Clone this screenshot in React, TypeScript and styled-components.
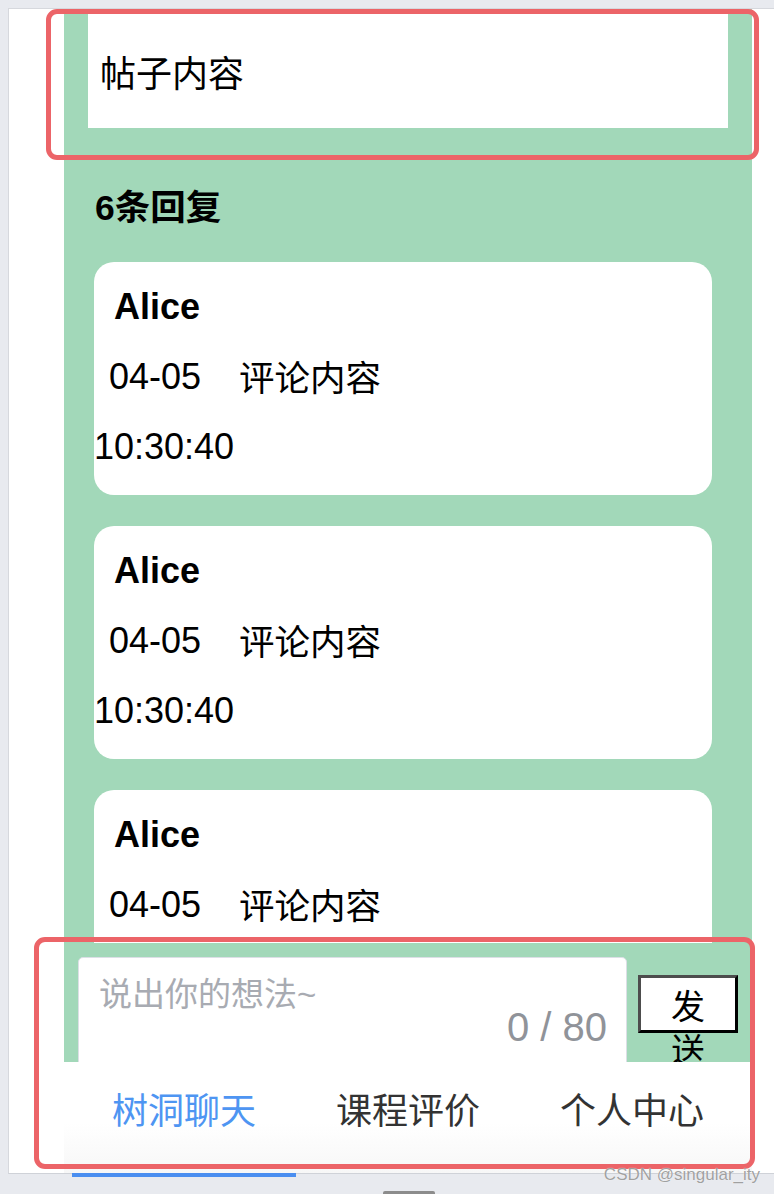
import React from "react";
import styled, { createGlobalStyle } from "styled-components";

const GlobalStyle = createGlobalStyle`
  html, body {
    margin: 0;
    padding: 0;
    background: #e8eaef;
  }
  body {
    font-family: "Liberation Sans", "Noto Sans CJK SC", sans-serif;
    color: #000;
  }
`;

const Page = styled.div`
  width: 774px;
  height: 1194px;
  box-sizing: border-box;
  padding: 8px 0 0 8px;
  display: flex;
  flex-direction: column;
  overflow: hidden;
  position: relative;
`;

const Viewport = styled.div`
  height: 1166px;
  box-sizing: border-box;
  background: #fff;
  border-top: 1px solid #d6d8dd;
  border-left: 1px solid #d6d8dd;
  border-bottom: 1px solid #cfd2d8;
  padding-left: 55px;
  position: relative;
`;

const Column = styled.div`
  width: 688px;
  height: 100%;
  display: flex;
  flex-direction: column;
`;

const Scroll = styled.div`
  flex: 1;
  min-height: 0;
  overflow: hidden;
  background: #a2d8b9;
`;

const Post = styled.div`
  height: 119px;
  box-sizing: border-box;
  margin: 0 24px;
  padding: 46px 12px 0;
  background: #fff;
  font-size: 36px;
  line-height: 40px;
`;

const Title = styled.h3`
  margin: 60px 0 34px 31px;
  font-size: 35.5px;
  line-height: 40px;
  font-weight: bold;
`;

const CardList = styled.div`
  display: flex;
  flex-direction: column;
  gap: 31px;
  margin: 0 40px 0 30px;
`;

const Card = styled.div`
  height: 233px;
  box-sizing: border-box;
  padding: 10px 0 13px 20px;
  background: #fff;
  border-radius: 20px;
  font-size: 36px;
  line-height: 70px;
  flex-shrink: 0;
`;

const Name = styled.div`
  font-weight: bold;
`;

const Row = styled.div`
  display: flex;
  align-items: flex-start;
`;

const DateCol = styled.div`
  width: 130px;
  margin-left: -5px;
  flex-shrink: 0;
`;

const DateLine = styled.div<{ $shift?: number }>`
  margin-left: ${(p) => p.$shift ?? 0}px;
  white-space: nowrap;
`;

const Content = styled.div`
  font-size: 35.5px;
  padding-top: 2px;
`;

const Composer = styled.div`
  height: 119px;
  flex-shrink: 0;
  box-sizing: border-box;
  padding: 14px 14px 0;
  background: #a2d8b9;
  display: flex;
  align-items: flex-start;
  gap: 11px;
  overflow: hidden;
`;

const InputBox = styled.div`
  position: relative;
  width: 549px;
  height: 130px;
  flex-shrink: 0;
`;

const TextArea = styled.textarea`
  width: 100%;
  height: 100%;
  box-sizing: border-box;
  border: 1px solid #dcdfe6;
  border-radius: 5px;
  background: #fff;
  padding: 17px 20px;
  font-family: "Liberation Sans", "Noto Sans CJK SC", sans-serif;
  font-size: 33px;
  line-height: 40px;
  resize: none;
  outline: none;
  &::placeholder {
    color: #a8abb2;
  }
`;

const Counter = styled.span`
  position: absolute;
  right: 20px;
  top: 48px;
  font-size: 40px;
  line-height: 44px;
  color: #909399;
`;

const SendButton = styled.button`
  width: 100px;
  height: 58px;
  margin-top: 18px;
  flex-shrink: 0;
  box-sizing: border-box;
  padding: 7px 0 0;
  background: #fff;
  border: 3px outset #4d4d4d;
  display: flex;
  justify-content: center;
  align-items: flex-start;
  overflow: visible;
  font-family: "Liberation Sans", "Noto Sans CJK SC", sans-serif;
  font-size: 34px;
  line-height: 44px;
  color: #000;
`;

const SendLabel = styled.span`
  width: 36px;
  text-align: center;
`;

const TabBar = styled.div`
  height: 111px;
  flex-shrink: 0;
  box-sizing: border-box;
  padding: 0 8px;
  display: flex;
  background: linear-gradient(#fff 55%, #f7f7f7);
`;

const Tab = styled.div<{ $active?: boolean }>`
  flex: 1;
  box-sizing: border-box;
  padding-top: 30px;
  text-align: center;
  font-size: 36px;
  line-height: 40px;
  color: ${(p) => (p.$active ? "#4e95f2" : "#333")};
  border-bottom: 4px solid ${(p) => (p.$active ? "#4a8ef0" : "transparent")};
  margin-bottom: -4px;
`;

const BottomBar = styled.div`
  flex: 1;
  display: flex;
  justify-content: center;
  align-items: flex-end;
  margin-left: -8px;
`;

const Handle = styled.div`
  width: 52px;
  height: 3px;
  margin-left: 44px;
  background: #8c8c8c;
  border-radius: 2px 2px 0 0;
`;

const Highlight = styled.div<{ $x: number; $y: number; $w: number; $h: number }>`
  position: absolute;
  left: ${(p) => p.$x}px;
  top: ${(p) => p.$y}px;
  width: ${(p) => p.$w}px;
  height: ${(p) => p.$h}px;
  box-sizing: border-box;
  border: 5px solid #ec6468;
  border-radius: 11px;
  pointer-events: none;
`;

const Watermark = styled.div`
  position: absolute;
  right: 14px;
  bottom: 9px;
  font-size: 17px;
  color: rgba(130, 130, 130, 0.75);
  text-shadow: 0 0 1px #fff;
  font-family: "Liberation Sans", sans-serif;
`;

const replies = [1, 2, 3];

export default function App() {
  return (
    <>
      <GlobalStyle />
      <Page>
        <Viewport>
          <Column>
            <Scroll>
              <Post>帖子内容</Post>
              <Title>6条回复</Title>
              <CardList>
                {replies.map((r) => (
                  <Card key={r}>
                    <Name>Alice</Name>
                    <Row>
                      <DateCol>
                        <DateLine>04-05</DateLine>
                        <DateLine $shift={-15}>10:30:40</DateLine>
                      </DateCol>
                      <Content>评论内容</Content>
                    </Row>
                  </Card>
                ))}
              </CardList>
            </Scroll>
            <Composer>
              <InputBox>
                <TextArea placeholder="说出你的想法~" maxLength={80} />
                <Counter>0 / 80</Counter>
              </InputBox>
              <SendButton>
                <SendLabel>发送</SendLabel>
              </SendButton>
            </Composer>
            <TabBar>
              <Tab $active>树洞聊天</Tab>
              <Tab>课程评价</Tab>
              <Tab>个人中心</Tab>
            </TabBar>
          </Column>
        </Viewport>
        <BottomBar>
          <Handle />
        </BottomBar>
        <Highlight $x={46} $y={9} $w={713} $h={151} />
        <Highlight $x={34} $y={937} $w={721} $h={232} />
        <Watermark>CSDN @singular_ity</Watermark>
      </Page>
    </>
  );
}
